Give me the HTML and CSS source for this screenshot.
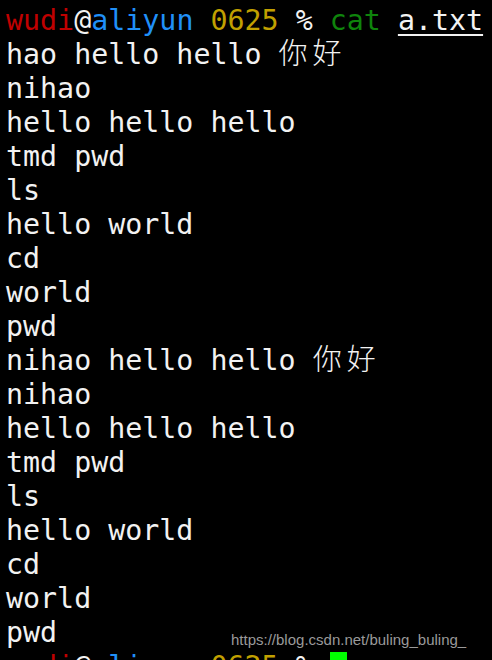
FILE: index.html
```html
<!DOCTYPE html>
<html>
<head>
<meta charset="utf-8">
<link rel="stylesheet" href="styles.css">
</head>
<body>
<div class="term">
<div class="line"><span class="red">wudi</span>@<span class="blue">aliyun</span> <span class="yellow">0625</span> % <span class="green">cat</span> <span class="ul">a.txt</span></div>
<div class="line">hao hello hello <span class="cjk">你好</span></div>
<div class="line">nihao</div>
<div class="line">hello hello hello</div>
<div class="line">tmd pwd</div>
<div class="line">ls</div>
<div class="line">hello world</div>
<div class="line">cd</div>
<div class="line">world</div>
<div class="line">pwd</div>
<div class="line">nihao hello hello <span class="cjk">你好</span></div>
<div class="line">nihao</div>
<div class="line">hello hello hello</div>
<div class="line">tmd pwd</div>
<div class="line">ls</div>
<div class="line">hello world</div>
<div class="line">cd</div>
<div class="line">world</div>
<div class="line">pwd</div>
<div class="line"><span class="red">wudi</span>@<span class="blue">aliyun</span> <span class="yellow">0625</span> % <span class="cursor"></span></div>
</div>
<div class="watermark">https://blog.csdn.net/buling_buling_</div>
</body>
</html>
```
FILE: styles.css
```css
html, body {
  margin: 0;
  padding: 0;
  background: #000;
  overflow: hidden;
}
body {
  width: 492px;
  height: 660px;
  position: relative;
}
.term {
  padding: 4px 0 0 6px;
  font-family: "DejaVu Sans Mono", monospace;
  font-size: 28.3px;
  line-height: 34px;
  color: #f2f2f2;
}
.line {
  height: 34px;
  white-space: pre;
}
.red { color: #c00000; }
.blue { color: #2090f8; }
.yellow { color: #c1a000; }
.green { color: #0f840c; }
.ul { text-decoration: underline; text-underline-offset: 4px; }
.cjk {
  font-family: "Noto Sans CJK SC", sans-serif;
  font-weight: 300;
  font-size: 29px;
  line-height: 20px;
  letter-spacing: 5px;
}
.cursor {
  display: inline-block;
  width: 17px;
  height: 30px;
  background: #00ff00;
  vertical-align: -6px;
}
.watermark {
  position: absolute;
  left: 231px;
  top: 631px;
  font-family: "Liberation Sans", Arial, sans-serif;
  font-size: 15px;
  color: #9a9a9a;
}
```
